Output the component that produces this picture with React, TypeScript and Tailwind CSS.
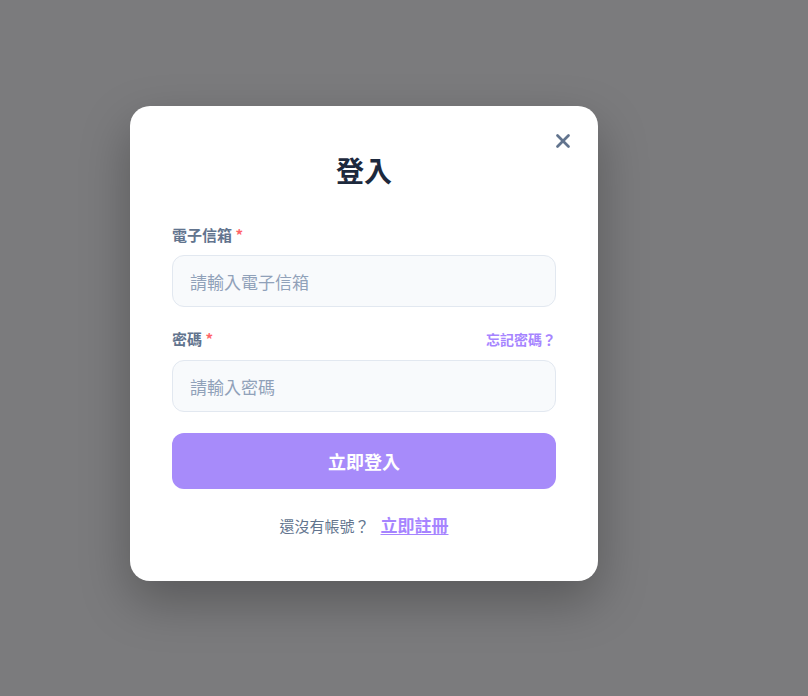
import React, { useState } from 'react';
import { X } from 'lucide-react';

const font = { fontFamily: '"Noto Sans CJK TC", "Noto Sans", sans-serif' };

const LoginModal: React.FC = () => {
    const [email, setEmail] = useState('');
    const [password, setPassword] = useState('');

    return (
        <div className="relative w-[468px] rounded-[20px] bg-white px-[42px] pt-[46px] pb-[43px] shadow-[0_20px_50px_rgba(0,0,0,0.28)]">
            <button className="absolute top-[24px] right-[24px] text-slate-500">
                <X size={22} strokeWidth={3} />
            </button>

            <h2 className="text-center text-[28px] leading-[36px] font-bold text-slate-800">登入</h2>

            {/* 電子信箱 */}
            <label className="mt-[36px] block text-[15px] leading-[22px] font-bold text-slate-500">
                電子信箱 <span className="text-red-400">*</span>
            </label>
            <input
                type="email"
                value={email}
                onChange={(e) => setEmail(e.target.value)}
                placeholder="請輸入電子信箱"
                className="mt-[9px] block h-[52px] w-full rounded-xl border border-slate-200 bg-slate-50 px-[17px] text-[17px] text-slate-700 placeholder:text-slate-400 outline-none"
            />

            {/* 密碼 */}
            <div className="mt-[21px] flex h-[22px] items-center justify-between">
                <label className="text-[15px] leading-[22px] font-bold text-slate-500">
                    密碼 <span className="text-red-400">*</span>
                </label>
                <a className="text-[14px] font-bold text-violet-400">忘記密碼？</a>
            </div>
            <input
                type="password"
                value={password}
                onChange={(e) => setPassword(e.target.value)}
                placeholder="請輸入密碼"
                className="mt-[10px] block h-[52px] w-full rounded-xl border border-slate-200 bg-slate-50 px-[17px] text-[17px] text-slate-700 placeholder:text-slate-400 outline-none"
            />

            <button className="mt-[21px] block h-[56px] w-full rounded-xl bg-[#a78bfa] text-[18px] font-bold text-white">
                立即登入
            </button>

            <p className="mt-[24px] text-center text-[15px] leading-[24px] text-slate-500">
                還沒有帳號？
                <a className="ml-[11px] text-[17px] font-bold text-violet-400 underline underline-offset-2">立即註冊</a>
            </p>
        </div>
    );
};

export default function App() {
    return (
        <div className="flex h-[696px] w-full items-start justify-start bg-[#7b7b7d] pt-[106px] pl-[130px]" style={font}>
            <LoginModal />
        </div>
    );
}
